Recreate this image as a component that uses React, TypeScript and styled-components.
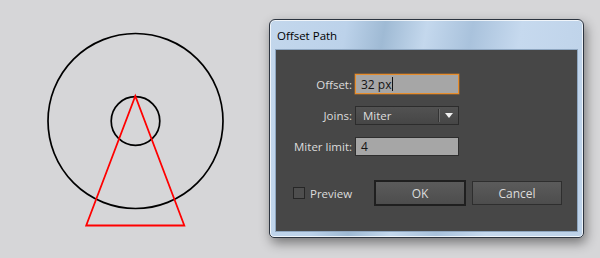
import styled, { createGlobalStyle } from "styled-components";

const GlobalStyle = createGlobalStyle`
  html, body {
    margin: 0;
    padding: 0;
    background: #d6d6d8;
  }
  body {
    font-family: "Open Sans", "Noto Sans", sans-serif;
  }
`;

const Page = styled.div`
  width: 600px;
  height: 258px;
  display: flex;
  align-items: flex-start;
  background: #d6d6d8;
  overflow: hidden;
`;

const Canvas = styled.svg`
  flex: 0 0 269px;
  width: 269px;
  height: 258px;
`;

const Window = styled.div`
  margin-top: 19px;
  width: 315px;
  height: 219px;
  box-sizing: border-box;
  display: flex;
  flex-direction: column;
  border: 1px solid #2c3440;
  border-radius: 6px 6px 5px 5px;
  background: linear-gradient(
    100deg,
    #c3d7ec 0%,
    #bcd2ea 22%,
    #9fbad4 33%,
    #c4d8ed 45%,
    #a9c2dc 58%,
    #c6d9ee 72%,
    #bcd1e8 100%
  );
  box-shadow: inset 0 0 0 1px rgba(255, 255, 255, 0.75),
    2px 5px 12px rgba(0, 0, 0, 0.45);
  padding: 0 5px 5px 5px;
`;

const TitleBar = styled.div`
  height: 27px;
  display: flex;
  align-items: center;
  padding-left: 2px;
  padding-top: 2px;
  font-family: "Open Sans", "Noto Sans", sans-serif;
  font-size: 11.5px;
  color: #000;
`;

const Panel = styled.div`
  flex: 1;
  box-sizing: border-box;
  background: #474747;
  border: 1px solid #8ea6c0;
  display: flex;
  flex-direction: column;
  padding-top: 24px;
  color: #dcdcdc;
  font-size: 11.5px;
`;

const Form = styled.div`
  display: grid;
  grid-template-columns: 76px 104px;
  grid-auto-rows: 20px;
  column-gap: 3px;
  row-gap: 11px;
`;

const Label = styled.div`
  text-align: right;
  align-self: center;
`;

const Field = styled.div<{ $focused?: boolean }>`
  box-sizing: border-box;
  height: ${(p) => (p.$focused ? 20 : 19)}px;
  align-self: center;
  display: flex;
  align-items: center;
  padding-left: 5px;
  background: #a6a6a6;
  border: 1px solid ${(p) => (p.$focused ? "#e88e2c" : "#2e2e2e")};
  box-shadow: ${(p) =>
    p.$focused ? "0 0 0 0.5px rgba(232, 142, 44, 0.6)" : "none"};
  color: #141414;
  font-size: 12px;
`;

const Caret = styled.span`
  display: inline-block;
  width: 1px;
  height: 14px;
  margin-left: 1px;
  background: #111;
`;

const Select = styled.div`
  box-sizing: border-box;
  height: 19px;
  align-self: center;
  display: flex;
  align-items: center;
  background: linear-gradient(#525252, #464646);
  border: 1px solid #2c2c2c;
  color: #dedede;
`;

const SelectValue = styled.div`
  flex: 1;
  padding-left: 7px;
`;

const SelectArrow = styled.div`
  width: 18px;
  height: 13px;
  display: flex;
  align-items: center;
  justify-content: center;
  border-left: 1px solid #6a6a6a;
  box-shadow: -1px 0 0 #333;
`;

const Footer = styled.div`
  margin-top: 24px;
  display: flex;
  align-items: center;
  padding-left: 17px;
`;

const Check = styled.div`
  display: flex;
  align-items: center;
  gap: 5px;
  width: 81px;
`;

const Box = styled.div`
  box-sizing: border-box;
  width: 12px;
  height: 12px;
  border: 1px solid #262626;
  background: #4e4e4e;
`;

const Button = styled.div<{ $primary?: boolean }>`
  box-sizing: border-box;
  width: ${(p) => (p.$primary ? 92 : 90)}px;
  height: ${(p) => (p.$primary ? 26 : 24)}px;
  margin-left: ${(p) => (p.$primary ? 0 : 6)}px;
  display: flex;
  align-items: center;
  justify-content: center;
  background: linear-gradient(#5b5b5b, #4d4d4d);
  border: ${(p) => (p.$primary ? "2px solid #1f1f1f" : "1px solid #2e2e2e")};
  color: #dcdcdc;
  font-size: 12px;
`;

export default function App() {
  return (
    <>
      <GlobalStyle />
      <Page>
        <Canvas viewBox="0 0 269 258">
          <circle cx="135.5" cy="121" r="87.5" fill="none" stroke="#000" strokeWidth="1.7" />
          <circle cx="135.5" cy="121" r="24.3" fill="none" stroke="#000" strokeWidth="1.7" />
          <polygon
            points="135.3,96 86.2,225.5 184.3,225.5"
            fill="none"
            stroke="#ff0000"
            strokeWidth="1.8"
          />
        </Canvas>
        <Window>
          <TitleBar>Offset Path</TitleBar>
          <Panel>
            <Form>
              <Label>Offset:</Label>
              <Field $focused>
                32 px
                <Caret />
              </Field>
              <Label>Joins:</Label>
              <Select>
                <SelectValue>Miter</SelectValue>
                <SelectArrow>
                  <svg width="8" height="5" viewBox="0 0 8 5">
                    <polygon points="0,0 8,0 4,5" fill="#f0f0f0" />
                  </svg>
                </SelectArrow>
              </Select>
              <Label>Miter limit:</Label>
              <Field>4</Field>
            </Form>
            <Footer>
              <Check>
                <Box />
                Preview
              </Check>
              <Button $primary>OK</Button>
              <Button>Cancel</Button>
            </Footer>
          </Panel>
        </Window>
      </Page>
    </>
  );
}
